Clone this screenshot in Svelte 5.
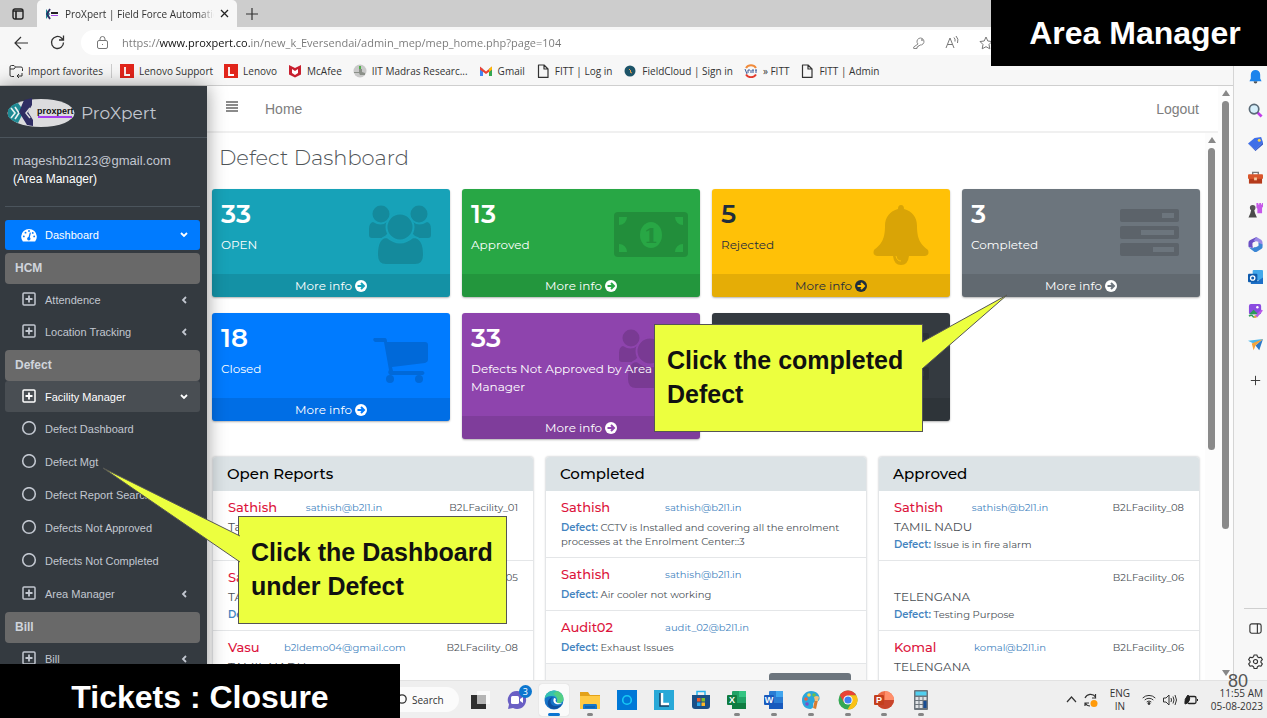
<script>
  const bookmarks = [
    { icon: "lenovo", label: "Lenovo Support" },
    { icon: "lenovo", label: "Lenovo" },
    { icon: "mcafee", label: "McAfee" },
    { icon: "iit", label: "IIT Madras Researc..." },
    { icon: "gmail", label: "Gmail" },
    { icon: "doc", label: "FITT | Log in" },
    { icon: "cloud", label: "FieldCloud | Sign in" },
    { icon: "fitt", label: "» FITT" },
    { icon: "doc", label: "FITT | Admin" },
  ];

  const menu = [
    { type: "item", icon: "gauge", label: "Dashboard", arrow: "down", state: "active" },
    { type: "header", label: "HCM" },
    { type: "item", icon: "plus", label: "Attendence", arrow: "left" },
    { type: "item", icon: "plus", label: "Location Tracking", arrow: "left" },
    { type: "header", label: "Defect" },
    { type: "item", icon: "plus", label: "Facility Manager", arrow: "down", state: "open" },
    { type: "item", icon: "circle", label: "Defect Dashboard" },
    { type: "item", icon: "circle", label: "Defect Mgt" },
    { type: "item", icon: "circle", label: "Defect Report Search" },
    { type: "item", icon: "circle", label: "Defects Not Approved" },
    { type: "item", icon: "circle", label: "Defects Not Completed" },
    { type: "item", icon: "plus", label: "Area Manager", arrow: "left" },
    { type: "header", label: "Bill" },
    { type: "item", icon: "plus", label: "Bill", arrow: "left" },
  ];

  const tiles = [
    { color: "teal", value: "33", label: "OPEN", icon: "users" },
    { color: "green", value: "13", label: "Approved", icon: "money" },
    { color: "yellow", value: "5", label: "Rejected", icon: "bell" },
    { color: "gray", value: "3", label: "Completed", icon: "server" },
    { color: "blue", value: "18", label: "Closed", icon: "cart" },
    { color: "purple", value: "33", label: "Defects Not Approved by Area Manager", icon: "users" },
    { color: "dark", value: "", label: "", icon: "server" },
  ];

  const panels = [
    {
      title: "Open Reports",
      rows: [
        { name: "Sathish", email: "sathish@b2l1.in", facility: "B2LFacility_01", state: "Tamil Nadu", defect: "" },
        { name: "Sathish", email: "", facility: "B2LFacility_05", state: "TAMIL NADU", defect: "" },
        { name: "Vasu", email: "b2ldemo04@gmail.com", facility: "B2LFacility_08", state: "TAMIL NADU" },
      ],
    },
    {
      title: "Completed",
      compact: true,
      rows: [
        { name: "Sathish", email: "sathish@b2l1.in", defect: "CCTV is Installed and covering all the enrolment processes at the Enrolment Center::3" },
        { name: "Sathish", email: "sathish@b2l1.in", defect: "Air cooler not working" },
        { name: "Audit02", email: "audit_02@b2l1.in", defect: "Exhaust Issues" },
      ],
    },
    {
      title: "Approved",
      rows: [
        { name: "Sathish", email: "sathish@b2l1.in", facility: "B2LFacility_08", state: "TAMIL NADU", defect: "Issue is in fire alarm" },
        { name: "", email: "", facility: "B2LFacility_06", state: "TELENGANA", defect: "Testing Purpose" },
        { name: "Komal", email: "komal@b2l1.in", facility: "B2LFacility_06", state: "TELENGANA" },
      ],
    },
  ];

  const edgeApps = ["bell", "search", "tag", "toolbox", "games", "m365", "outlook", "designer", "drop"];

  const taskApps = [
    { name: "desktops" },
    { name: "chat" },
    { name: "edge", current: true },
    { name: "explorer", running: true },
    { name: "alexa" },
    { name: "vantage" },
    { name: "store" },
    { name: "excel", running: true },
    { name: "word", running: true },
    { name: "paint", running: true },
    { name: "chrome", running: true },
    { name: "powerpoint", running: true },
    { name: "calculator", running: true },
  ];
</script>

{#snippet bookmarkIcon(name)}
  <svg class="fav-icon" viewBox="0 0 14 14" aria-hidden="true">
    {#if name === "lenovo"}
      <rect width="14" height="14" fill="#e1251b" />
      <path d="M5 3v8h5" fill="none" stroke="#fff" stroke-width="1.8" />
    {:else if name === "mcafee"}
      <path d="M1 1l6 3 6-3v9.500l-6 3-6-3z" fill="#c8202f" />
      <path d="M4 5l3 2 3-2v4l-3 2-3-2z" fill="#fff" />
    {:else if name === "iit"}
      <circle cx="7" cy="7" r="6.500" fill="#c9c9c9" />
      <path d="M1 8h5V5h3v3l3 1v2H7L6 9H1z" fill="#8b9089" />
      <path d="M6 2h2v3H6z" fill="#4fae4a" />
    {:else if name === "gmail"}
      <path d="M1 12V3l3 2v7z" fill="#4285f4" />
      <path d="M10 12V5l3-2v9z" fill="#34a853" />
      <path d="M1 2.500L7 7.500l6-5v3.200L7 10 1 5.700z" fill="#ea4335" />
      <path d="M10 5l3-2.500v3L10 8z" fill="#fbbc04" />
    {:else if name === "doc"}
      <path d="M2.500 1h5.500l4 4v8.400H2.500zM8 1v4h4" fill="none" stroke="#333" stroke-width="1.200" stroke-linejoin="round" />
    {:else if name === "cloud"}
      <circle cx="7" cy="7" r="5.500" fill="#1d5468" />
      <path d="M6 5l2 2-1 1 2 1" fill="none" stroke="#e8a04a" />
    {:else}
      <path d="M2 4a6 6 0 0 1 10 0" fill="none" stroke="#f08a3a" stroke-width="2" />
      <path d="M2 10.500a6 6 0 0 0 10 0" fill="none" stroke="#e33b2e" stroke-width="2" />
      <path d="M1 5l2 5M4 6h2M4 6v3M7 6v3M8 6h2M9 6v3M11 6h2M12 6v3" stroke="#3d5b99" />
    {/if}
  </svg>
{/snippet}

{#snippet menuIcon(name)}
  {#if name === "gauge"}
    <svg class="menu-icon" viewBox="0 0 17 16" aria-hidden="true">
      <path d="M2 15a8.300 8.300 0 1 1 13 0z" fill="#fff" />
      <g fill="#007bff">
        <circle cx="3" cy="9.500" r="1" /><circle cx="4.800" cy="5.500" r="1" /><circle cx="8.500" cy="3.800" r="1" />
        <circle cx="12.500" cy="5.800" r="1" /><circle cx="14" cy="9.500" r="1" /><circle cx="8.300" cy="12" r="1.800" />
      </g>
      <path d="M8.300 12l1.600-6.500" stroke="#007bff" stroke-width="1.300" />
    </svg>
  {:else if name === "plus"}
    <svg class="menu-icon" viewBox="0 0 16 16" fill="none" stroke="currentColor" stroke-width="1.500" aria-hidden="true">
      <rect x="2" y="1" width="12" height="12" rx="1" />
      <path d="M4.500 7h7M8 3.500v7" stroke-width="1.800" />
    </svg>
  {:else}
    <svg class="menu-icon" viewBox="0 0 16 16" fill="none" stroke="currentColor" stroke-width="1.600" aria-hidden="true">
      <circle cx="8" cy="7" r="6.300" />
    </svg>
  {/if}
{/snippet}

{#snippet tileIcon(name)}
  <svg class="tile-icon" viewBox="0 0 74 60" aria-hidden="true">
    {#if name === "users"}
      <g transform="translate(5 0)">
        <circle cx="12" cy="9" r="8.500" />
        <circle cx="50" cy="9" r="8.500" />
        <path d="M4 17q8 5 14 0l4 8-8 8H3q-3 0-3-3v-6q0-6 4-7z" />
        <path d="M58 17q-8 5-14 0l-4 8 8 8h11q3 0 3-3v-6q0-6-4-7z" />
        <path class="gap" d="M18 32q13 11 26 0c8 0 11 8 11 18q0 10-9 10H17q-9 0-9-10c0-10 3-18 10-18z" />
        <circle class="gap" cx="31" cy="22" r="13.500" />
      </g>
    {:else if name === "money"}
      <rect y="7" width="74" height="45" rx="4" />
      <g class="cut">
        <ellipse cx="37" cy="30" rx="11" ry="13" />
        <path d="M5 12h8a8 8 0 0 1-8 8zM69 12h-8a8 8 0 0 0 8 8zM5 47v-8a8 8 0 0 1 8 8zM69 47v-8a8 8 0 0 0-8 8z" />
      </g>
      <text x="37" y="38" text-anchor="middle">1</text>
    {:else if name === "bell"}
      <path d="M37 0q3 0 3 4c8 2 13 8 13 17 0 15 5 19 11 24q2 5-3 6H13q-5-1-3-6c6-5 11-9 11-24 0-9 5-15 13-17q0-4 3-4z" />
      <path d="M29 51h16q-1 9-8 9t-8-9z" />
      <path class="slit" d="M32 51q1 5 5 5" />
    {:else if name === "server"}
      <g transform="translate(-2 -1)">
        <rect x="8" y="5" width="59" height="13" rx="2" />
        <rect x="8" y="22" width="59" height="13" rx="2" />
        <rect x="8" y="39" width="59" height="13" rx="2" />
        <path class="cut" d="M50 9h12v5H50zM29 26h33v5H29zM41 43h21v5H41z" />
      </g>
    {:else}
      <path d="M10 9h11q2 0 2 4h38q3 0 3 3v15q0 2-3 3l-33 4 1 4h30q3 2 0 4H26q-3-2-1-5l-5-28h-9q-3-2-1-4z" />
      <circle cx="26" cy="50" r="4" />
      <circle cx="55" cy="50" r="4" />
    {/if}
  </svg>
{/snippet}

{#snippet edgeIcon(name)}
  <svg viewBox="0 0 16 16" aria-hidden="true">
    {#if name === "bell"}
      <path d="M6 13h4q0 2.500-2 2.500T6 13z" fill="#555" />
      <path d="M3 6a5 5 0 0 1 10 0v4l1.500 3h-13L3 10z" fill="#1b83ec" />
    {:else if name === "search"}
      <path d="M10 10l4.500 4.500" stroke="#c13be8" stroke-width="3" />
      <circle cx="6.500" cy="6.500" r="5" fill="#d6effb" stroke="#5a6b78" stroke-width="1.800" />
    {:else if name === "tag"}
      <path d="M0 8l7-6 7-1 2 6-8 8z" fill="#3f6fe8" />
      <path d="M0 8l8 7 8-8v2l-8 7z" fill="#2b50c4" />
      <circle cx="12" cy="4.500" r="1.600" fill="#fbd34c" />
    {:else if name === "toolbox"}
      <path d="M5 5V2.500h6V5" fill="none" stroke="#777" stroke-width="1.500" />
      <rect y="4.500" width="16" height="5" rx="1" fill="#d9562b" />
      <rect x="1" y="9.500" width="14" height="5" fill="#b53b1c" />
      <rect x="6.500" y="8" width="3" height="3" fill="#f6c9a0" />
    {:else if name === "games"}
      <path d="M9 0h2v1.500h1V0h2v1.500h1V0h1v4l-1 1v6H10V6L9 5z" fill="#c657e8" />
      <circle cx="5" cy="5" r="3" fill="#555" />
      <path d="M3.500 7h3l1 4 2 4.500H.5l2-4.500z" fill="#4b4b4b" />
    {:else if name === "m365"}
      <path d="M9 0L2 3.500Q.5 4.500.5 6v4.500L5 12V6l6-3z" fill="#6b4fc4" />
      <path d="M9 0l5 3q1.500 1 1.500 3v3L11 7V5L6 4z" fill="#9a8ae6" />
      <path d="M15.500 8v3q0 1-1 1.500L9 16q-1 .5-2 0L.5 11l4 1 6.500-3V6z" fill="#3a86d4" />
      <path d="M8 5l3 1.500v3L8 11 5 9.500v-3z" fill="#f7f7f7" />
    {:else if name === "outlook"}
      <rect x="5" width="11" height="11" rx="1" fill="#42a8ea" />
      <path d="M3 8l7 4 6-4v7H3z" fill="#1c6fc7" />
      <rect y="4" width="10" height="9" rx="1" fill="#0f5cad" />
      <circle cx="5" cy="8.500" r="2.300" fill="none" stroke="#fff" stroke-width="1.400" />
    {:else if name === "designer"}
      <rect x="1" width="13" height="11" rx="2" fill="#8a4be0" />
      <path d="M1 11l5-5 5 5z" fill="#2c9b58" />
      <circle cx="10" cy="3.500" r="1.300" fill="#fff" />
      <path d="M1 13q3-2 4 0t4 0" fill="none" stroke="#2c9b58" stroke-width="1.500" />
      <path d="M7 13l7-7 2 1-6 7z" fill="#b85be8" />
      <path d="M6 15l1-3 3 2z" fill="#f2a33a" />
    {:else}
      <path d="M0 4l16-2-8 6z" fill="#49b6ec" />
      <path d="M16 2l-4 12-4-5z" fill="#2a79c9" />
      <path d="M8 9l8-7L4 7l2 7z" fill="#f3a33c" />
    {/if}
  </svg>
{/snippet}

{#snippet officeIcon(letter, light, mid, dark)}
  <rect x="5" y="1" width="14" height="18" rx="1" fill={mid} />
  <path d="M12 1h7v6h-7z" fill={light} />
  <path d="M5 13h14v6H5z" fill={dark} />
  <rect y="5" width="10" height="10" rx="1" fill={dark} />
  <text class="office-letter" x="5" y="13" text-anchor="middle">{letter}</text>
{/snippet}

{#snippet taskIcon(name)}
  <svg viewBox="0 0 20 20" aria-hidden="true">
    {#if name === "desktops"}
      <rect x="7" y="1" width="13" height="13" fill="#fafafa" />
      <path d="M1 5h6v9h9v5H1z" fill="#2f2f2f" />
      <rect x="7" y="5" width="9" height="9" fill="#b5b5b5" />
    {:else if name === "chat"}
      <path d="M10 1a9 9 0 1 1-4 17l-5 1 1-4.500A9 9 0 0 1 10 1z" fill="#6a5fc4" />
      <rect x="4" y="6" width="8" height="8" rx="1.500" fill="#fff" />
      <path d="M13 9l3-2v6l-3-2z" fill="#fff" />
    {:else if name === "edge"}
      <circle cx="10" cy="10" r="9.500" fill="#1673c8" />
      <path d="M.5 9C1 4 5 .5 10 .5c6 0 10 4 9.500 9-.5 4-5 5-7 3C14 9 12 6 8 6S2 7 .5 9z" fill="#35c1b1" />
      <path d="M13 1c5 2 7 6 6.300 9-1 3-5 4-7 2.500C15 10 13 5 9 4z" fill="#63d46f" opacity=".7" />
      <path d="M9 7c-4 3-3 9 3 9 3 0 5-1 6-2-3 6-12 7-14 1-1-4 1-7 5-8z" fill="#0d4f9e" />
      <path d="M10 8q-2 4 2 6 4 1 6-1-4 1-6-1-1-2 0-3-1-1-2-1z" fill="#fff" />
    {:else if name === "explorer"}
      <path d="M0 2h8l2 3h10v13H0z" fill="#e3a21a" />
      <path d="M0 6h20v13H0z" fill="#ffca45" />
      <path d="M4 14h12q1 0 1 2v3H3v-3q0-2 1-2z" fill="#1477cc" />
      <path d="M5 17h10" stroke="#0c5296" />
    {:else if name === "alexa"}
      <rect width="20" height="20" fill="#0078d7" />
      <circle cx="10" cy="10" r="4.300" fill="none" stroke="#17c9f5" stroke-width="1.600" />
    {:else if name === "vantage"}
      <rect width="20" height="20" fill="#29a9d8" />
      <path d="M7 3v12h8" fill="none" stroke="#123f63" stroke-width="3.500" />
      <path d="M8 3v11h7" fill="none" stroke="#fff" stroke-width="2.500" />
    {:else if name === "store"}
      <path d="M6 5V1.500h8V5" fill="none" stroke="#27b4ee" stroke-width="1.500" />
      <path d="M1 5h18v11q0 3-3 3H4q-3 0-3-3z" fill="#1a4f86" />
      <path d="M6 8h3.500v3.500H6z" fill="#f1592a" /><path d="M10.500 8H14v3.500h-3.500z" fill="#80bb2b" />
      <path d="M6 12.500h3.500V16H6z" fill="#2aa9ea" /><path d="M10.500 12.500H14V16h-3.500z" fill="#fdb827" />
    {:else if name === "excel"}
      {@render officeIcon("X", "#33c481", "#21a366", "#107c41")}
    {:else if name === "word"}
      {@render officeIcon("W", "#41a5ee", "#2b7cd3", "#185abd")}
    {:else if name === "paint"}
      <path d="M10 1c6 0 9 4 8.500 8-1 4-5 1-6 4s1 5-3 6C4 19 1 15 1 10s4-9 9-9z" fill="#2ba7dc" />
      <circle cx="5" cy="9" r="1.800" fill="#f25f3a" /><circle cx="8" cy="5" r="1.800" fill="#f8d34a" />
      <circle cx="13" cy="5" r="1.800" fill="#6bc04b" /><circle cx="6" cy="14" r="1.800" fill="#7a52c7" />
      <path d="M14 9l3 1-2 9-3-1z" fill="#d87d32" /><path d="M13 7q3-2 5 0l-1 4h-3z" fill="#f4c078" />
    {:else if name === "chrome"}
      <circle cx="10" cy="10" r="9.500" fill="#34a853" />
      <path d="M1.800 5.300A9.500 9.500 0 0 1 18.200 5.300L10 5.500 6 12.500z" fill="#ea4335" />
      <path d="M18.300 5.300A9.500 9.500 0 0 1 9.500 19.500L14 12l-3-6.700z" fill="#fbc116" />
      <circle cx="10" cy="10" r="4.600" fill="#fff" /><circle cx="10" cy="10" r="3.600" fill="#3f7ff0" />
    {:else if name === "powerpoint"}
      <circle cx="11" cy="10" r="9" fill="#ed6c47" />
      <path d="M11 1a9 9 0 0 1 9 9h-9z" fill="#ff8f6b" />
      <path d="M2 10h18a9 9 0 0 1-18 0z" fill="#c8452c" />
      <rect y="5" width="10" height="10" rx="1" fill="#c43e1c" />
      <text class="office-letter" x="5" y="13" text-anchor="middle">P</text>
    {:else}
      <rect x="3" width="14" height="20" rx="1" fill="#6c757c" />
      <rect x="4.500" y="1.500" width="11" height="4" fill="#50d0f0" />
      <path d="M4.500 7h3v3h-3zM8.500 7h3v3h-3zM12.500 7h3v3h-3zM4.500 11h3v3h-3zM8.500 11h3v3h-3zM4.500 15h3v3h-3zM8.500 15h3v3h-3z" fill="#dfe3e6" />
      <path d="M12.500 11h3v7h-3z" fill="#164d94" />
    {/if}
  </svg>
{/snippet}

<div class="screen">
  <div class="tab-strip">
    <button class="bare workspace" aria-label="Tab actions">
      <svg width="12" height="12" viewBox="0 0 12 12" fill="none" stroke="#222" aria-hidden="true">
        <rect x="1" y="1" width="10" height="10" rx="2" stroke-width="1.400" />
        <path d="M1 3h10M4 3v8" stroke-width="1.600" />
      </svg>
    </button>
    <div class="tab">
      <svg width="14" height="12" viewBox="0 0 14 12" aria-hidden="true">
        <path d="M1 1l4 5-4 5z" fill="#1b8a93" />
        <path d="M5 1L2 6l3 5" fill="none" stroke="#2f2d63" stroke-width="1.800" />
        <path d="M6 5h7" stroke="#222" stroke-width="2" />
        <path d="M6 7.500h7" stroke="#a64be8" />
      </svg>
      <span class="tab-title">ProXpert | Field Force Automation</span>
      <button class="bare" aria-label="Close tab">
        <svg width="9" height="9" viewBox="0 0 9 9" stroke="#222" stroke-width="1.300" aria-hidden="true"><path d="M1 1l7 7M8 1L1 8" /></svg>
      </button>
    </div>
    <button class="bare new-tab" aria-label="New tab">
      <svg width="12" height="12" viewBox="0 0 12 12" stroke="#333" stroke-width="1.200" aria-hidden="true"><path d="M6 0v12M0 6h12" /></svg>
    </button>
  </div>

  <div class="toolbar">
    <button class="bare" aria-label="Back">
      <svg width="14" height="14" viewBox="0 0 14 14" fill="none" stroke="#333" stroke-width="1.200" aria-hidden="true"><path d="M14 7H1M7 1L1 7l6 6" /></svg>
    </button>
    <button class="bare" aria-label="Refresh">
      <svg width="15" height="15" viewBox="0 0 15 15" fill="none" stroke="#333" stroke-width="1.300" aria-hidden="true"><path d="M13.500 7.500a6 6 0 1 1-2-4.500L13 4.500M13.500 .5v4.500H9" /></svg>
    </button>
    <div class="address">
      <svg width="11" height="13" viewBox="0 0 11 13" fill="none" stroke="#777" aria-hidden="true">
        <rect x=".5" y="4.500" width="10" height="8" rx="1.500" /><path d="M3 4.500V3a2.500 2.500 0 0 1 5 0v1.500M5.500 8v1" />
      </svg>
      <input
        type="text"
        aria-label="Address"
        value="https://www.proxpert.co.in/new_k_Eversendai/admin_mep/mep_home.php?page=104"
      />
      <svg width="12" height="12" viewBox="0 0 12 12" fill="none" stroke="#888" aria-hidden="true">
        <path d="M5 7a3.500 3.500 0 1 1 2 1L6 9H5v1H4v1.500H.7V10z" /><circle cx="9" cy="3" r=".6" />
      </svg>
      <svg width="14" height="13" viewBox="0 0 14 13" fill="none" stroke="#777" aria-hidden="true">
        <path d="M1 12L5 2l4 10M2.500 8.500h5M9 1.500q1.500 1.500 1 4M11 0q3 3 1.500 7" />
      </svg>
      <svg width="14" height="14" viewBox="0 0 14 14" fill="none" stroke="#777" stroke-linejoin="round" aria-hidden="true">
        <path d="M7 1l1.800 4 4.200.5-3 3 .8 4.300L7 10.700l-3.800 2.100.8-4.300-3-3L5.200 5z" />
      </svg>
    </div>
  </div>

  <div class="window">
    <div class="viewport">
      <nav class="bookmarks">
        <a href="#import">
          <svg class="fav-icon" viewBox="0 0 14 14" fill="none" stroke="#333" aria-hidden="true">
            <path d="M5 12.500H2.500a1.500 1.500 0 0 1-1.500-1.500V3q0-1.500 1.500-1.500H5L6.500 3H12q1.500 0 1.500 1.500V7M1 5h4L6.500 3M13 9v3H8M10 10l-2 2 2 2" />
          </svg>Import favorites</a
        >
        <span class="divider"></span>
        {#each bookmarks as bookmark}
          <a href="#bookmark">{@render bookmarkIcon(bookmark.icon)}{bookmark.label}</a>
        {/each}
      </nav>

      <div class="page">
        <aside class="sidebar">
          <a class="brand" href="#home">
            <svg width="70" height="34" viewBox="0 0 70 34" aria-hidden="true">
              <ellipse cx="35" cy="17" rx="33.500" ry="14" fill="#dcdcde" />
              <path d="M2 14q4-6 10-7l6 8-6 12q-8-3-10-7z" fill="#1f8a94" />
              <path d="M5 12l4 5-4 5M9 11l4 6-4 6" fill="none" stroke="#e8f2f2" stroke-width="1.600" />
              <path d="M18 4l8-2v7l-4 7 5 8v6l-6-1-8-13z" fill="#2f2d63" />
              <path d="M24 12l-4 5 4 5M29 12l-4 5 4 5" fill="none" stroke="#dcdcde" stroke-width="1.500" />
              <text x="31" y="18">proxpert</text>
              <path d="M32 21h34" stroke="#a63df0" stroke-width="2" />
            </svg>
            <span>ProXpert</span>
          </a>
          <div class="user">
            <span>mageshb2l123@gmail.com</span>
            <strong>(Area Manager)</strong>
          </div>
          <ul class="menu">
            {#each menu as entry}
              {#if entry.type === "header"}
                <li class="menu-header">{entry.label}</li>
              {:else}
                <li>
                  <a class="menu-item {entry.state || ''}" href="#menu">
                    {@render menuIcon(entry.icon)}
                    <span>{entry.label}</span>
                    {#if entry.arrow}
                      <svg
                        class="arrow {entry.arrow}"
                        viewBox="0 0 8 8"
                        fill="none"
                        stroke="currentColor"
                        stroke-width="1.800"
                        aria-hidden="true"
                      >
                        <polyline points="6 1 3 4 6 7"></polyline>
                      </svg>
                    {/if}
                  </a>
                </li>
              {/if}
            {/each}
          </ul>
        </aside>

        <main class="main">
          <header class="topnav">
            <button class="bare" aria-label="Toggle menu">
              <svg width="12" height="11" viewBox="0 0 12 11" stroke="#666" stroke-width="1.500" aria-hidden="true">
                <path d="M0 1h12M0 4h12M0 7h12M0 10h12" />
              </svg>
            </button>
            <a href="#home">Home</a>
            <a class="logout" href="#logout">Logout</a>
          </header>

          <div class="scroller">
            <div class="content">
              <h1>Defect Dashboard</h1>
              <div class="tiles">
                {#each tiles as tile}
                  <section class="tile {tile.color}">
                    <div class="tile-body">
                      {@render tileIcon(tile.icon)}
                      <h3>{tile.value}</h3>
                      <p>{tile.label}</p>
                    </div>
                    <a class="tile-footer" href="#more" aria-label="More info">
                      {#if tile.label}
                        More info
                        <svg width="12" height="12" viewBox="0 0 12 12" aria-hidden="true">
                          <circle cx="6" cy="6" r="6" />
                          <path d="M2.500 6h6M6 3l3 3-3 3" />
                        </svg>
                      {/if}
                    </a>
                  </section>
                {/each}
              </div>

              <div class="panels">
                {#each panels as panel}
                  <section class="panel" class:compact={panel.compact}>
                    <h2>{panel.title}</h2>
                    {#each panel.rows as row}
                      <div class="report">
                        <div class="report-head">
                          <b>{row.name}</b>
                          <a href="#mail">{row.email}</a>
                          {#if row.facility}<span>{row.facility}</span>{/if}
                        </div>
                        {#if row.state}<p class="state">{row.state}</p>{/if}
                        {#if row.defect !== undefined}
                          <p class="defect"><b>Defect:</b> {row.defect}</p>
                        {/if}
                      </div>
                    {/each}
                    {#if panel.compact}
                      <div class="panel-footer"><button aria-label="View all"></button></div>
                    {/if}
                  </section>
                {/each}
              </div>
            </div>
            <div class="scrollbar inner"><i></i><span></span></div>
          </div>
        </main>
        <div class="scrollbar outer"><i></i><span></span><i class="down"></i></div>
      </div>
    </div>

    <aside class="edge-bar">
      <div class="edge-apps">
        {#each edgeApps as app}
          <button class="bare" aria-label={app}>{@render edgeIcon(app)}</button>
        {/each}
      </div>
      <button class="bare" aria-label="Add">
        <svg viewBox="0 0 16 16" stroke="#333" aria-hidden="true"><path d="M8 3v10M3 8h10" /></svg>
      </button>
      <div class="edge-bottom">
        <button class="bare" aria-label="Hide sidebar">
          <svg viewBox="0 0 16 16" fill="none" stroke="#333" stroke-width="1.200" aria-hidden="true">
            <rect x="2" y="3" width="12" height="10" rx="2" /><path d="M10 3v10" />
          </svg>
        </button>
        <button class="bare" aria-label="Settings">
          <svg viewBox="0 0 16 16" fill="none" stroke="#333" stroke-width="1.200" aria-hidden="true">
            <path d="M6.500 1h3l.6 2 1.600.9 2.100-.5 1.500 2.600-1.500 1.500v1.500l1.500 1.500-1.500 2.500-2.100-.5-1.600 1-.6 2h-3l-.6-2-1.600-1-2.100.5L.7 10.500 2.200 9V7.500L.7 6l1.500-2.600 2.100.5L5.900 3z" stroke-linejoin="round" />
            <circle cx="8" cy="8" r="2.200" />
          </svg>
        </button>
      </div>
    </aside>
  </div>

  <footer class="taskbar">
    <button class="search">
      <svg width="12" height="12" viewBox="0 0 12 12" fill="none" stroke="#333" stroke-width="1.300" aria-hidden="true">
        <circle cx="7" cy="5" r="4.200" /><path d="M4 8l-3.500 3.500" />
      </svg>Search
    </button>
    <div class="task-apps">
      {#each taskApps as app}
        <button class="bare task-app" class:current={app.current} class:running={app.running} aria-label={app.name}>
          {@render taskIcon(app.name)}
          {#if app.name === "chat"}<span class="badge">3</span>{/if}
        </button>
      {/each}
    </div>
    <div class="tray">
      <svg width="11" height="7" viewBox="0 0 11 7" fill="none" stroke="#333" stroke-width="1.200" aria-hidden="true"><path d="M1 6l4.500-5L10 6" /></svg>
      <svg width="14" height="14" viewBox="0 0 14 14" fill="none" stroke="#333" stroke-width="1.200" aria-hidden="true">
        <path d="M1 5a6 6 0 0 1 10.500-1V1M12 5H8M1 13v-3h4M1 10q2 3 5 3" /><circle cx="10" cy="10.500" r="3.500" fill="#ff9a0a" stroke="none" />
      </svg>
      <span class="lang">ENG<br />IN</span>
      <svg width="14" height="11" viewBox="0 0 14 11" fill="none" stroke="#333" aria-hidden="true">
        <path d="M.7 4a9 9 0 0 1 12.600 0M2.700 6a6.300 6.300 0 0 1 8.600 0M4.700 8a3.500 3.500 0 0 1 4.600 0" /><circle cx="7" cy="9.500" r="1" fill="#333" />
      </svg>
      <svg width="14" height="12" viewBox="0 0 14 12" fill="none" stroke="#333" aria-hidden="true">
        <path d="M.5 4H3l3-3v10L3 8H.5zM8 4q1 2 0 4M10 2.500q2 3.500 0 7M12 1q3 5 0 10" />
      </svg>
      <svg width="14" height="12" viewBox="0 0 14 12" fill="none" stroke="#222" aria-hidden="true">
        <rect x="3.500" y="2.500" width="8.500" height="7" rx="1.500" stroke-width="1.300" /><path d="M13.500 5v2" /><path d="M4 1q3 3 1 6t-4 3q-1-5 3-9z" fill="#222" />
      </svg>
      <div class="clock"><span>11:55 AM</span><span>05-08-2023</span></div>
    </div>
  </footer>

  <div class="banner role">Area Manager</div>
  <div class="banner topic">Tickets : Closure</div>
  <div class="slide-number">80</div>

  <div class="callout completed">
    Click the completed Defect
    <svg width="86" height="76" viewBox="0 0 86 76" aria-hidden="true"><path d="M0 48L85 1 0 75" /></svg>
  </div>
  <div class="callout dashboard">
    Click the Dashboard under Defect
    <svg width="138" height="96" viewBox="0 0 138 96" aria-hidden="true"><path d="M138 69L1 1 138 95" /></svg>
  </div>
</div>

<style>
  :global(body) {
    margin: 0;
    background: #f7f7f7;
  }

  .screen {
    --ui: "Open Sans", "Noto Sans", sans-serif;
    --sans: "Liberation Sans", Arial, sans-serif;
    --page: Montserrat, Inter, sans-serif;
    position: relative;
    display: flex;
    flex-direction: column;
    height: 100vh;
    overflow: hidden;
    font-family: var(--ui);
    font-size: 10px;
    color: #333;
  }

  .screen * {
    box-sizing: border-box;
  }

  svg {
    flex: none;
    display: block;
  }

  a {
    color: inherit;
    text-decoration: none;
  }

  .bare {
    display: flex;
    padding: 0;
    border: none;
    background: none;
    color: inherit;
  }

  .tab-strip {
    flex: none;
    display: flex;
    align-items: center;
    height: 27px;
    background: #cdcdcd;
  }

  .workspace {
    padding: 0 13px 0 12px;
  }

  .tab {
    display: flex;
    align-items: center;
    gap: 6px;
    width: 200px;
    height: 100%;
    padding: 0 8px;
    border-radius: 5px 5px 0 0;
    background: #f7f7f7;
  }

  .tab-title {
    flex: 1;
    overflow: hidden;
    white-space: nowrap;
    -webkit-mask-image: linear-gradient(90deg, #000 90%, transparent);
    mask-image: linear-gradient(90deg, #000 90%, transparent);
  }

  .new-tab {
    margin-left: 9px;
  }

  .toolbar {
    flex: none;
    display: flex;
    align-items: center;
    gap: 22px;
    height: 31px;
    padding-left: 14px;
    background: #f7f7f7;
  }

  .address {
    flex: 1;
    display: flex;
    align-items: center;
    gap: 20px;
    height: 25px;
    max-width: 1100px;
    padding: 0 188px 0 16px;
    margin-left: -6px;
    border-radius: 13px;
    background: #fff;
  }

  .address input {
    flex: 1;
    min-width: 0;
    padding: 0;
    margin-left: -6px;
    border: none;
    outline: none;
    font-family: var(--ui);
    font-size: 11px;
    color: transparent;
    background: linear-gradient(90deg, #777 37px, #111 37px, #111 128px, #777 128px);
    -webkit-background-clip: text;
    background-clip: text;
  }

  .window {
    flex: 1;
    display: flex;
    min-height: 0;
  }

  .viewport {
    flex: 1;
    display: flex;
    flex-direction: column;
    min-width: 0;
  }

  .bookmarks {
    flex: none;
    display: flex;
    align-items: center;
    gap: 11px;
    height: 28px;
    padding: 0 9px 2px;
    border-bottom: 1px solid #cfcfcf;
    background: #f7f7f7;
    white-space: nowrap;
  }

  .bookmarks a {
    display: flex;
    align-items: center;
    gap: 5px;
  }

  .divider {
    width: 1px;
    height: 14px;
    margin: 0 -3px;
    background: #ccc;
  }

  .fav-icon {
    width: 14px;
    height: 14px;
  }

  .page {
    flex: 1;
    display: flex;
    min-height: 0;
    background: #fff;
  }

  .sidebar {
    position: relative;
    z-index: 1;
    flex: none;
    width: 207px;
    overflow: hidden;
    background: #343a40;
    box-shadow: 0 0 18px rgba(0, 0, 0, 0.4);
    font-family: var(--sans);
    color: #c2c7d0;
  }

  .brand {
    display: flex;
    align-items: center;
    gap: 5px;
    height: 52px;
    padding: 2px 6px 0;
    border-bottom: 1px solid #4b545c;
    font-family: var(--page);
    font-size: 17px;
  }

  .brand text {
    font-family: var(--sans);
    font-size: 9px;
    font-weight: 700;
    fill: #111;
  }

  .user {
    display: flex;
    flex-direction: column;
    height: 69px;
    margin: 0 7px 13px 5px;
    padding: 14px 8px 0;
    border-bottom: 1px solid #4b545c;
    font-size: 13px;
    line-height: 18px;
  }

  .user strong {
    font-size: 12px;
    font-weight: 400;
    color: #fff;
  }

  .menu {
    display: flex;
    flex-direction: column;
    margin: 0 7px 0 5px;
    padding: 0;
    list-style: none;
    font-size: 11px;
  }

  .menu-item {
    display: flex;
    align-items: center;
    gap: 8px;
    height: 33px;
    padding: 0 12px 0 16px;
  }

  .menu-item span {
    flex: 1;
  }

  .menu-item.active {
    height: 30px;
    margin-bottom: 1px;
    border-radius: 3px;
    background: #007bff;
    color: #fff;
  }

  .menu-item.open {
    border-radius: 3px;
    background: #494e53;
    color: #fff;
  }

  .menu-header {
    height: 31px;
    margin-top: 2px;
    padding: 0 10px;
    border-radius: 4px;
    background: #696969;
    font-size: 12px;
    font-weight: 700;
    line-height: 30px;
    color: #d0d4db;
  }

  .menu-header + li .menu-item {
    height: 31px;
  }

  .menu-icon {
    width: 16px;
    height: 16px;
  }

  .arrow {
    width: 8px;
    height: 8px;
  }

  .arrow.down {
    transform: rotate(-90deg);
  }

  .main {
    flex: 1;
    display: flex;
    flex-direction: column;
    min-width: 0;
  }

  .topnav {
    flex: none;
    display: flex;
    align-items: center;
    gap: 27px;
    height: 47px;
    padding: 0 19px;
    border-bottom: 2px solid #f0f0f0;
    font-family: var(--sans);
    font-size: 14px;
    color: #7d7d7d;
  }

  .topnav .bare {
    margin-bottom: 5px;
  }

  .logout {
    margin-left: auto;
  }

  .scroller {
    flex: 1;
    display: flex;
    min-height: 0;
  }

  .content {
    flex: 1;
    min-width: 0;
    padding: 0 5px;
    overflow: hidden;
    font-family: var(--page);
  }

  h1 {
    margin: 0 0 17px;
    padding: 11px 7px 0;
    font-size: 21px;
    font-weight: 300;
    line-height: 28px;
    color: #4f5458;
  }

  .tiles {
    display: grid;
    grid-template-columns: repeat(4, 1fr);
    align-items: start;
    gap: 16px 12px;
  }

  .tile {
    border-radius: 3px;
    overflow: hidden;
    background: var(--tile);
    color: #fff;
    box-shadow: 0 1px 2px rgba(0, 0, 0, 0.3);
  }

  .teal {
    --tile: #17a2b8;
  }

  .green {
    --tile: #28a745;
  }

  .yellow {
    --tile: #ffc107;
    color: #1f2d3d;
  }

  .gray {
    --tile: #6c757d;
  }

  .blue {
    --tile: #007bff;
  }

  .purple {
    --tile: #8e44ad;
  }

  .dark {
    --tile: #343a40;
  }

  .tile-body {
    position: relative;
    min-height: 85px;
    padding: 9px 9px 20px;
  }

  .tile-icon {
    position: absolute;
    top: 16px;
    right: 12px;
    width: 74px;
    height: 60px;
    fill: color-mix(in srgb, var(--tile) 85%, #000);
  }

  .tile-icon .cut {
    fill: var(--tile);
  }

  .tile-icon .gap {
    stroke: var(--tile);
    stroke-width: 2;
  }

  .tile-icon .slit {
    fill: none;
    stroke: var(--tile);
  }

  .tile-icon text {
    font-family: "DejaVu Serif", serif;
    font-size: 21px;
    font-weight: 700;
  }

  h3 {
    position: relative;
    min-height: 32px;
    margin: 0 0 6px;
    font-size: 26px;
    font-weight: 600;
    line-height: 32px;
  }

  .tile p {
    position: relative;
    margin: 0;
    font-size: 12px;
    line-height: 18px;
  }

  .tile-footer {
    display: flex;
    align-items: center;
    justify-content: center;
    gap: 3px;
    height: 23px;
    background: rgba(0, 0, 0, 0.1);
    font-size: 12px;
  }

  .tile-footer circle {
    fill: currentColor;
  }

  .tile-footer path {
    fill: none;
    stroke: var(--tile);
    stroke-width: 2;
  }

  .panels {
    display: grid;
    grid-template-columns: repeat(3, 1fr);
    gap: 11px;
    margin-top: 17px;
  }

  .panel {
    border: 1px solid #e4e6e8;
    border-radius: 4px;
    overflow: hidden;
    background: #fff;
    box-shadow: 0 0 2px rgba(0, 0, 0, 0.12);
  }

  h2 {
    margin: 0;
    padding: 0 14px;
    background: #dce3e6;
    font-size: 15px;
    font-weight: 500;
    line-height: 34px;
    color: #000;
  }

  .report {
    padding: 6px 15px 8px;
    border-bottom: 1px solid #e4e6e8;
    font-size: 10px;
    color: #4a4f55;
  }

  .report-head {
    display: grid;
    grid-template-columns: 56px 120px 1fr;
    align-items: center;
    height: 20px;
  }

  .report-head b {
    font-size: 13px;
    font-weight: 500;
    color: #dc143c;
  }

  .report-head a {
    text-align: center;
    color: #4384c0;
  }

  .report-head span {
    text-align: right;
  }

  .compact .report-head {
    grid-template-columns: 104px 1fr;
  }

  .compact .report-head a {
    text-align: left;
  }

  .state {
    margin: 2px 0 0;
    font-size: 12px;
    line-height: 15px;
  }

  .defect {
    min-height: 14px;
    margin: 4px 0 0;
    line-height: 14px;
  }

  .defect b {
    font-weight: 600;
    color: #4384c0;
  }

  .panel-footer {
    display: flex;
    justify-content: flex-end;
    height: 100%;
    padding: 9px 15px;
    background: #f7f7f7;
  }

  .panel-footer button {
    width: 82px;
    height: 26px;
    border: none;
    border-radius: 3px;
    background: #6c757d;
  }

  .scrollbar {
    flex: none;
    display: flex;
    flex-direction: column;
    align-items: center;
    padding: 4px 0;
    background: #fcfcfc;
  }

  .scrollbar i {
    border: 4px solid transparent;
    border-top-width: 0;
    border-bottom: 6px solid #888;
  }

  .scrollbar i.down {
    margin-top: auto;
    border-top: 6px solid #888;
    border-bottom-width: 0;
  }

  .scrollbar span {
    width: 7px;
    margin-top: 5px;
    border-radius: 4px;
    background: #8a8a8a;
  }

  .inner {
    width: 13px;
  }

  .inner span {
    height: 56%;
  }

  .outer {
    width: 15px;
  }

  .outer span {
    height: 73%;
  }

  .edge-bar {
    flex: none;
    display: flex;
    flex-direction: column;
    align-items: center;
    width: 34px;
    padding-left: 10px;
    border-left: 1px solid #d5d5d5;
    background: #f7f7f7;
  }

  .edge-bar svg {
    width: 15px;
    height: 15px;
  }

  .edge-apps {
    display: flex;
    flex-direction: column;
    justify-content: space-between;
    height: 283px;
    margin: 11px 0 21px;
  }

  .edge-bottom {
    display: flex;
    flex-direction: column;
    align-items: center;
    gap: 18px;
    width: 100%;
    margin-top: auto;
    padding: 12px 0 11px;
    border-top: 1px solid #cfcfcf;
  }

  .taskbar {
    flex: none;
    display: flex;
    align-items: center;
    height: 38px;
    padding: 0 4px 0 374px;
    border-top: 1px solid #e2e2e2;
    background: #efefef;
  }

  .search {
    display: flex;
    align-items: center;
    gap: 5px;
    width: 85px;
    height: 25px;
    padding: 0 0 0 21px;
    border: none;
    border-radius: 13px;
    background: #fbfbfb;
    font-family: var(--ui);
    font-size: 10px;
    color: #333;
  }

  .task-apps {
    display: flex;
    justify-content: space-between;
    width: 461px;
    margin-left: 11px;
  }

  .task-app {
    position: relative;
  }

  .task-app svg {
    position: relative;
    width: 20px;
    height: 20px;
  }

  .task-app.current::before {
    content: "";
    position: absolute;
    inset: -6px -5px;
    border-radius: 3px;
    background: #fafafa;
    box-shadow: 0 0 1px #bbb;
  }

  .task-app.current::after,
  .task-app.running::after {
    content: "";
    position: absolute;
    bottom: -6px;
    left: 7px;
    width: 6px;
    height: 3px;
    border-radius: 2px;
    background: #858585;
  }

  .task-app.current::after {
    left: 4px;
    width: 12px;
    background: #0a74d1;
  }

  .badge {
    position: absolute;
    top: -5px;
    right: -5px;
    width: 13px;
    height: 13px;
    border-radius: 50%;
    background: #0b76cf;
    font-family: var(--ui);
    font-size: 9px;
    line-height: 13px;
    text-align: center;
    color: #fff;
  }

  .office-letter {
    font-family: var(--sans);
    font-size: 9px;
    font-weight: 700;
    fill: #fff;
  }

  .tray {
    display: flex;
    align-items: center;
    gap: 7px;
    margin-left: auto;
  }

  .lang {
    width: 30px;
    line-height: 13px;
    text-align: center;
  }

  .clock {
    display: flex;
    flex-direction: column;
    margin-left: 6px;
    line-height: 13px;
    text-align: right;
  }

  .banner {
    position: absolute;
    z-index: 3;
    display: flex;
    align-items: center;
    justify-content: center;
    background: #000;
    font-family: var(--sans);
    font-size: 32px;
    font-weight: 700;
    color: #fff;
  }

  .role {
    top: 0;
    right: 0;
    width: 276px;
    height: 66px;
    padding-left: 12px;
  }

  .topic {
    bottom: 0;
    left: 0;
    width: 400px;
    height: 54px;
    padding-top: 12px;
  }

  .slide-number {
    position: absolute;
    right: 19px;
    bottom: 26px;
    font-family: var(--sans);
    font-size: 18px;
    line-height: 22px;
    color: #555;
  }

  .callout {
    position: absolute;
    z-index: 2;
    width: 269px;
    height: 108px;
    padding: 18px 12px;
    border: 1px solid #555;
    background: #ecff3f;
    font-family: var(--sans);
    font-size: 25px;
    font-weight: 700;
    line-height: 34px;
    color: #111;
  }

  .callout svg {
    position: absolute;
    fill: #ecff3f;
    stroke: #555;
  }

  .completed {
    top: 324px;
    left: 654px;
  }

  .completed svg {
    left: 267px;
    bottom: 61px;
  }

  .dashboard {
    top: 516px;
    left: 238px;
  }

  .dashboard svg {
    right: 266px;
    bottom: 60px;
  }
</style>
